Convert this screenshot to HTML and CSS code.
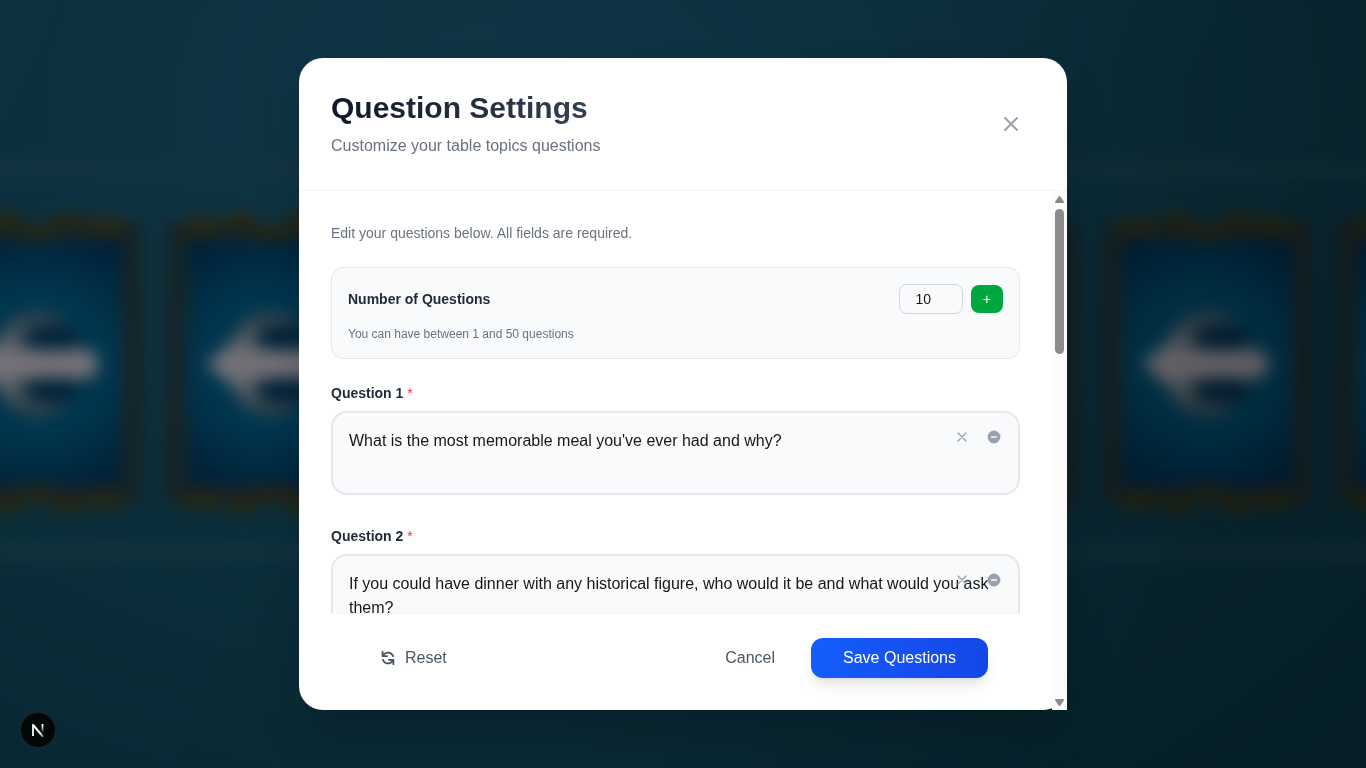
FILE: index.html
```html
<!DOCTYPE html>
<html lang="en">
<head>
<meta charset="utf-8">
<meta name="viewport" content="width=device-width, initial-scale=1">
<title>Question Settings</title>
<link rel="stylesheet" href="styles.css">
</head>
<body>
<svg class="backdrop" viewBox="0 0 1366 768" preserveAspectRatio="xMidYMid slice" aria-hidden="true">
  <defs>
    <filter id="soft" x="-20%" y="-20%" width="140%" height="140%" color-interpolation-filters="sRGB"><feGaussianBlur stdDeviation="8"/></filter>
    <radialGradient id="face" gradientUnits="userSpaceOnUse" cx="101" cy="136" r="155">
      <stop offset="0" stop-color="#003f5c"/>
      <stop offset="0.5" stop-color="#00344c"/>
      <stop offset="1" stop-color="#001a32"/>
    </radialGradient>
    <linearGradient id="shade" x1="0" x2="1" y1="0" y2="0.25">
      <stop offset="0" stop-color="#000" stop-opacity="0"/>
      <stop offset="0.6" stop-color="#000" stop-opacity="0.03"/>
      <stop offset="1" stop-color="#000" stop-opacity="0.2"/>
    </linearGradient>
    <g id="card">
      <path d="M0 0H201V272H0Z" fill="#19282a"/>
      <path d="M3 3H198V269H3Z" fill="none" stroke="#182224" stroke-width="14"/>
      <path d="M14 -1H50M58 -6H84M118 -6H144M150 -1H187M84 7H118M14 273H50M58 278H84M118 278H144M150 273H187M84 265H118" fill="none" stroke="#29270f" stroke-width="15"/>
      <rect x="16" y="13" width="171" height="246" fill="url(#face)"/>
      <ellipse cx="101" cy="137" rx="46" ry="52" fill="#35444d"/>
      <path d="M40 137L84 96Q76 137 84 178Z" fill="#58636d"/>
      <ellipse cx="117" cy="111" rx="27" ry="13" fill="#00233a"/>
      <ellipse cx="117" cy="163" rx="27" ry="13" fill="#00233a"/>
      <path d="M36 137L58 119L82 123H148Q162 123 162 137T148 151H82L58 155Z" fill="#757278"/>
    </g>
  </defs>
  <g filter="url(#soft)">
    <path d="M-40 170H1406M-40 552H1406" stroke="#17363f" stroke-width="9"/>
    <use href="#card" x="-64" y="227"/>
    <use href="#card" x="170" y="227"/>
    <use href="#card" x="404" y="227"/>
    <use href="#card" x="638" y="227"/>
    <use href="#card" x="872" y="227"/>
    <use href="#card" x="1106" y="227"/>
    <use href="#card" x="1340" y="227"/>
  </g>
  <rect width="1366" height="768" fill="url(#shade)"/>
</svg>

<main class="stage">
  <section class="modal" role="dialog" aria-labelledby="title">
    <header class="modal-header">
      <div>
        <h1 class="title" id="title">Question Settings</h1>
        <p class="subtitle">Customize your table topics questions</p>
      </div>
      <button class="close" type="button" aria-label="Close">
        <svg width="24" height="24" viewBox="0 0 24 24" fill="none" stroke="currentColor" stroke-width="2" stroke-linecap="round" stroke-linejoin="round"><path d="M6 18L18 6M6 6l12 12"/></svg>
      </button>
    </header>

    <div class="modal-body">
      <form class="form">
        <div class="fields">
          <p class="hint">Edit your questions below. All fields are required.</p>

          <div class="count-card">
            <div class="count-row">
              <label class="label" for="count">Number of Questions</label>
              <div class="count-controls">
                <input class="count-input" id="count" type="number" min="1" max="50" value="10">
                <button class="add" type="button" aria-label="Add question">+</button>
              </div>
            </div>
            <p class="count-note">You can have between 1 and 50 questions</p>
          </div>

          <div class="question">
            <label class="label question-label" for="q1">Question 1 <span class="required">*</span></label>
            <div class="question-box">
              <textarea class="question-text" id="q1" rows="2">What is the most memorable meal you've ever had and why?</textarea>
              <div class="question-actions">
                <button class="icon-button" type="button" aria-label="Clear question 1"><svg width="16" height="16" viewBox="0 0 24 24" fill="none" stroke="currentColor" stroke-width="2" stroke-linecap="round"><path d="M6 18L18 6M6 6l12 12"/></svg></button>
                <button class="icon-button" type="button" aria-label="Remove question 1"><svg width="16" height="16" viewBox="0 0 20 20" fill="currentColor"><path fill-rule="evenodd" d="M10 18a8 8 0 100-16 8 8 0 000 16zM7 9a1 1 0 000 2h6a1 1 0 100-2H7z" clip-rule="evenodd"/></svg></button>
              </div>
            </div>
          </div>

          <div class="question">
            <label class="label question-label" for="q2">Question 2 <span class="required">*</span></label>
            <div class="question-box">
              <textarea class="question-text" id="q2" rows="2">If you could have dinner with any historical figure, who would it be and what would you ask them?</textarea>
              <div class="question-actions">
                <button class="icon-button" type="button" aria-label="Clear question 2"><svg width="16" height="16" viewBox="0 0 24 24" fill="none" stroke="currentColor" stroke-width="2" stroke-linecap="round"><path d="M6 18L18 6M6 6l12 12"/></svg></button>
                <button class="icon-button" type="button" aria-label="Remove question 2"><svg width="16" height="16" viewBox="0 0 20 20" fill="currentColor"><path fill-rule="evenodd" d="M10 18a8 8 0 100-16 8 8 0 000 16zM7 9a1 1 0 000 2h6a1 1 0 100-2H7z" clip-rule="evenodd"/></svg></button>
              </div>
            </div>
          </div>
        </div>

        <footer class="actions">
          <button class="button" type="reset">
            <svg width="18" height="18" viewBox="0 0 20 20" fill="currentColor"><path fill-rule="evenodd" d="M4 2a1 1 0 011 1v2.101a7.002 7.002 0 0111.601 2.566 1 1 0 11-1.885.666A5.002 5.002 0 005.999 7H9a1 1 0 010 2H4a1 1 0 01-1-1V3a1 1 0 011-1zm.008 9.057a1 1 0 011.276.61A5.002 5.002 0 0014.001 13H11a1 1 0 110-2h5a1 1 0 011 1v5a1 1 0 11-2 0v-2.101a7.002 7.002 0 01-11.601-2.566 1 1 0 01.61-1.276z" clip-rule="evenodd"/></svg>
            Reset
          </button>
          <div class="actions-end">
            <button class="button button-cancel" type="button">Cancel</button>
            <button class="button button-save" type="submit">Save Questions</button>
          </div>
        </footer>
      </form>

      <div class="scrollbar" aria-hidden="true">
        <svg width="9" height="7" viewBox="0 0 9 7"><path d="M4.500 1L8 6H1Z" fill="#8b8b8b" stroke="#8b8b8b" stroke-width="2" stroke-linejoin="round"/></svg>
        <div class="scroll-track"><div class="scroll-thumb"></div></div>
        <svg width="9" height="7" viewBox="0 0 9 7"><path d="M1 1H8L4.500 6Z" fill="#8b8b8b" stroke="#8b8b8b" stroke-width="2" stroke-linejoin="round"/></svg>
      </div>
    </div>
  </section>
</main>

<button class="dev-badge" type="button" aria-label="Open developer tools">
  <svg width="14" height="14" viewBox="0 0 14 14" fill="none">
    <defs>
      <linearGradient id="nDiag" gradientUnits="userSpaceOnUse" x1="7" y1="7" x2="13" y2="14"><stop offset="0.4" stop-color="#fff"/><stop offset="1" stop-color="#fff" stop-opacity="0.3"/></linearGradient>
      <linearGradient id="nStem" gradientUnits="userSpaceOnUse" x1="11" y1="1" x2="11" y2="10"><stop offset="0.2" stop-color="#fff"/><stop offset="1" stop-color="#fff" stop-opacity="0"/></linearGradient>
    </defs>
    <path d="M2 13V1.500" stroke="#fff" stroke-width="1.800"/>
    <path d="M1.700 1.500L12.200 14" stroke="url(#nDiag)" stroke-width="2"/>
    <path d="M11.500 1V10" stroke="url(#nStem)" stroke-width="1.800"/>
  </svg>
</button>
</body>
</html>
```

FILE: styles.css
```css
* {
  box-sizing: border-box;
}

body,
h1,
p {
  margin: 0;
}

body {
  min-height: 100vh;
  overflow: hidden;
  background: radial-gradient(ellipse at 36% 14%, #113747 0%, #0c303d 45%, #072630 100%);
  color: #171717;
  font: 16px/24px "Liberation Sans", Arial, sans-serif;
}

button,
input,
textarea {
  margin: 0;
  font: inherit;
  color: inherit;
}

button {
  border: 0;
  background: none;
  cursor: pointer;
}

svg {
  display: block;
  flex: none;
}

.backdrop {
  position: fixed;
  inset: 0;
  width: 100%;
  height: 100%;
}

.stage {
  position: relative;
  display: flex;
  align-items: center;
  justify-content: center;
  height: 100vh;
  padding: 0 16px;
}

.modal {
  display: flex;
  flex-direction: column;
  width: 100%;
  max-width: 768px;
  height: 85vh;
  border-radius: 24px;
  background: #fff;
  box-shadow: 0 25px 50px -12px rgb(0 0 0 / 25%);
}

.modal-header {
  display: flex;
  align-items: center;
  justify-content: space-between;
  padding: 32px;
  border-bottom: 1px solid #f3f4f6;
}

.title {
  margin-bottom: 8px;
  background: linear-gradient(to right, #101828, #364153);
  background-clip: text;
  color: transparent;
  font-size: 30px;
  line-height: 36px;
}

.subtitle {
  color: #6a7282;
}

.close {
  padding: 12px;
  border-radius: 16px;
  color: #99a1af;
}

.modal-body {
  display: flex;
  flex: 1;
  min-height: 0;
}

.form {
  display: flex;
  flex: 1;
  flex-direction: column;
  min-width: 0;
  padding: 0 32px;
}

.fields {
  flex: 1;
  min-height: 0;
  padding-top: 32px;
  overflow-y: auto;
  scrollbar-width: none;
}

.hint {
  margin-bottom: 24px;
  color: #6a7282;
  font-size: 14px;
  line-height: 20px;
}

.label {
  color: #1e2939;
  font-size: 14px;
  font-weight: 700;
  line-height: 20px;
}

.count-card {
  padding: 16px;
  border: 1px solid #e5e7eb;
  border-radius: 12px;
  background: #f9fafb;
}

.count-row {
  display: flex;
  align-items: center;
  justify-content: space-between;
  margin-bottom: 12px;
}

.count-controls {
  display: flex;
  align-items: center;
  gap: 8px;
}

.count-input {
  width: 64px;
  height: 30px;
  padding: 4px 8px;
  border: 1px solid #d1d5dc;
  border-radius: 8px;
  background: transparent;
  font-size: 14px;
  line-height: 20px;
  text-align: center;
}

.add {
  padding: 4px 12px;
  border-radius: 8px;
  background: #00a63e;
  color: #fff;
  font-size: 14px;
  line-height: 20px;
}

.count-note {
  color: #6a7282;
  font-size: 12px;
  line-height: 16px;
}

.question {
  margin-top: 24px;
}

.question-label {
  display: block;
  margin-bottom: 8px;
}

.required {
  color: #fb2c36;
  font-weight: 400;
}

.question-box {
  position: relative;
}

.question-text {
  width: 100%;
  padding: 16px;
  border: 2px solid #e5e7eb;
  border-radius: 16px;
  background: #f9fafb;
  overflow: hidden;
  resize: none;
}

.question-actions {
  position: absolute;
  top: 12px;
  right: 12px;
  display: flex;
  gap: 4px;
}

.icon-button {
  padding: 6px;
  border-radius: 8px;
  color: #99a1af;
}

.actions {
  display: flex;
  align-items: center;
  justify-content: space-between;
  padding: 24px 32px 32px;
  border-top: 1px solid #f3f4f6;
  background: #fff;
}

.actions-end {
  display: flex;
  gap: 12px;
}

.button {
  display: flex;
  align-items: center;
  gap: 8px;
  padding: 8px 16px;
  border-radius: 12px;
  color: #4a5565;
}

.button-cancel {
  padding: 8px 24px;
}

.button-save {
  padding: 8px 32px;
  background: linear-gradient(to right, #155dfc, #1447e6);
  box-shadow: 0 10px 15px -3px rgb(0 0 0 / 10%), 0 4px 6px -4px rgb(0 0 0 / 10%);
  color: #fff;
}

.scrollbar {
  display: flex;
  flex-direction: column;
  align-items: center;
  gap: 6px;
  width: 15px;
  padding: 5px 0 4px;
  background: #fcfcfc;
}

.scroll-track {
  flex: 1;
}

.scroll-thumb {
  width: 9px;
  height: 30%;
  border-radius: 5px;
  background: #8b8b8b;
}

.dev-badge {
  position: fixed;
  bottom: 20px;
  left: 20px;
  display: flex;
  align-items: center;
  justify-content: center;
  width: 36px;
  height: 36px;
  padding: 0;
  border: 1px solid #1e2729;
  border-radius: 50%;
  background: #020708;
}
```
